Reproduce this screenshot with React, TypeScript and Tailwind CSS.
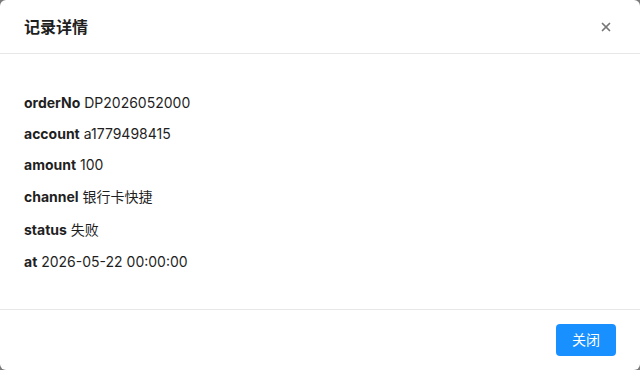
import { X } from 'lucide-react';

const FIELDS: Array<[string, string, boolean]> = [
  ['orderNo', 'DP2026052000', false],
  ['account', 'a1779498415', false],
  ['amount', '100', false],
  ['channel', '银行卡快捷', true],
  ['status', '失败', true],
  ['at', '2026-05-22 00:00:00', false],
];

export default function App() {
  return (
    <div
      className="h-[370px] w-[640px] bg-[#7a7a7a]"
      style={{ fontFamily: 'Inter, "Noto Sans CJK SC", sans-serif' }}
    >
      <div className="flex h-full flex-col overflow-hidden rounded-[6px] bg-white text-[#1f1f1f]">
        {/* header */}
        <div className="flex h-[54px] items-center justify-between border-b border-[#e8e8e8] pl-6 pr-[27px]">
          <h2 className="text-base font-semibold">记录详情</h2>
          <X className="h-[14px] w-[14px] text-[#777]" strokeWidth={3} />
        </div>

        {/* body */}
        <div className="flex-1 px-6 pt-[40px] text-sm">
          {FIELDS.map(([k, v, cjk]) => (
            <p key={k} className={cjk ? 'mb-[13px] leading-[20px]' : 'mb-[14px] leading-[17px]'}>
              <b className="font-bold">{k}</b> {v}
            </p>
          ))}
        </div>

        {/* footer */}
        <div className="flex h-[61px] items-center justify-end border-t border-[#e8e8e8] px-6">
          <button className="h-8 w-[60px] rounded-[4px] bg-[#1890ff] text-sm text-white">关闭</button>
        </div>
      </div>
    </div>
  );
}
